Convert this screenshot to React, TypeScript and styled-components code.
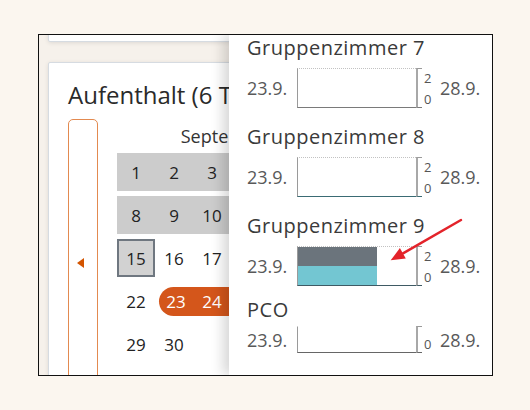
import React from "react";
import styled, { createGlobalStyle } from "styled-components";

const Global = createGlobalStyle`
  html, body { margin: 0; padding: 0; background: #fbf6ef; }
  body { font-family: "Open Sans", "Noto Sans", Arial, sans-serif; }
  * { box-sizing: border-box; }
`;

const Frame = styled.div`
  position: relative;
  margin: 34px 0 0 38px;
  width: 455px;
  height: 342px;
  border: 1px solid #111;
  background: #f6f1eb;
  overflow: hidden;
`;

const Main = styled.div`
  padding: 0 9px;
  display: flex;
  flex-direction: column;
  gap: 20px;
`;

const Card = styled.section`
  background: #fff;
  border: 1px solid #d6dbe1;
  border-radius: 2px;
  box-shadow: 0 1px 4px rgba(0, 0, 0, 0.1);
`;

const PrevCard = styled(Card)`
  margin-top: -11px;
  height: 18px;
`;

const StayCard = styled(Card)`
  padding: 17px 19px 0 19px;
`;

const Title = styled.h2`
  margin: 0 0 10px 0;
  font-size: 24px;
  line-height: 29px;
  font-weight: 400;
  color: #2a2a2a;
  white-space: nowrap;
`;

const CalendarBody = styled.div`
  display: flex;
  align-items: stretch;
`;

const NavButton = styled.button`
  width: 30px;
  padding: 0;
  border: 1px solid #e38a50;
  border-radius: 5px;
  background: #fff;
  display: flex;
  align-items: center;
  justify-content: center;
`;

const Triangle = styled.span`
  width: 0;
  height: 0;
  border-top: 5px solid transparent;
  border-bottom: 5px solid transparent;
  border-right: 7px solid #d35400;
  margin-right: 5px;
`;

const Calendar = styled.div`
  margin-left: 19px;
  width: 266px;
`;

const MonthTitle = styled.div`
  height: 34px;
  line-height: 34px;
  text-align: center;
  font-size: 18px;
  color: #333;
`;

const DayGrid = styled.div`
  display: grid;
  grid-template-columns: repeat(7, 38px);
  grid-auto-rows: 38px;
  row-gap: 5px;
`;

const Day = styled.div<{ $past?: boolean; $today?: boolean }>`
  display: flex;
  align-items: center;
  justify-content: center;
  font-size: 17px;
  color: #222;
  background: ${(p) => (p.$today ? "#d2d2d2" : p.$past ? "#cccccc" : "transparent")};
  border: ${(p) => (p.$today ? "2px solid #6f7780" : "none")};
`;

const RangeFill = styled.span<{ $start?: boolean; $end?: boolean }>`
  flex: 1;
  height: 29px;
  display: flex;
  align-items: center;
  justify-content: center;
  background: #d4561b;
  color: #fff;
  margin-left: ${(p) => (p.$start ? "4px" : "0")};
  margin-right: ${(p) => (p.$end ? "4px" : "0")};
  border-radius: ${(p) =>
    p.$start ? "15px 0 0 15px" : p.$end ? "0 15px 15px 0" : "0"};
`;

const Panel = styled.aside`
  position: absolute;
  top: 0;
  right: 0;
  bottom: 0;
  width: 263px;
  background: #fff;
  box-shadow: -6px 0 12px rgba(0, 0, 0, 0.16);
  padding: 1px 0 0 18px;
`;

const Room = styled.div<{ $mt: number }>`
  margin-top: ${(p) => p.$mt}px;
`;

const RoomName = styled.div`
  font-size: 20px;
  letter-spacing: 0.5px;
  line-height: 24px;
  color: #3a3a3a;
  white-space: nowrap;
`;

const ChartRow = styled.div<{ $pt: number }>`
  padding-top: ${(p) => p.$pt}px;
  display: flex;
  align-items: center;
`;

const DateText = styled.span<{ $w?: number }>`
  font-size: 18px;
  line-height: 24px;
  color: #595959;
  width: ${(p) => (p.$w ? `${p.$w}px` : "auto")};
  white-space: nowrap;
`;

const Plot = styled.div<{ $h: number; $base: string; $dotted: boolean }>`
  width: 119px;
  height: ${(p) => p.$h}px;
  border-left: 1px solid #9a9a9a;
  border-top: 1px ${(p) => (p.$dotted ? "dotted #c2c2c2" : "solid transparent")};
  border-bottom: 1px solid ${(p) => p.$base};
  display: flex;
  flex-direction: column;
`;

const Bar = styled.div<{ $color: string }>`
  flex: 1;
  background: ${(p) => p.$color};
`;

const Bracket = styled.div<{ $h: number; $base: string }>`
  width: 6px;
  height: ${(p) => p.$h}px;
  border-left: 2px solid #a8a8a8;
  border-top: 1px solid #9a9a9a;
  border-bottom: 1px solid ${(p) => p.$base};
`;

const AxisLabels = styled.div<{ $h: number; $single: boolean }>`
  width: 18px;
  height: ${(p) => p.$h}px;
  padding: 1px 0 0 2px;
  display: flex;
  flex-direction: column;
  justify-content: ${(p) => (p.$single ? "flex-end" : "space-between")};
  font-size: 13px;
  line-height: 18px;
  color: #555;
`;

const Overlay = styled.svg`
  position: absolute;
  inset: 0;
  pointer-events: none;
`;

type RoomData = {
  name: string;
  h: number;
  ticks: string[];
  base: string;
  fill?: number;
  mt: number;
  pt: number;
};

const rooms: RoomData[] = [
  { name: "Gruppenzimmer 7", h: 40, ticks: ["2", "0"], base: "#7a7a7a", mt: 0, pt: 8 },
  { name: "Gruppenzimmer 8", h: 40, ticks: ["2", "0"], base: "#3a6b74", mt: 17, pt: 8 },
  { name: "Gruppenzimmer 9", h: 40, ticks: ["2", "0"], base: "#3f5a64", fill: 67, mt: 17, pt: 8 },
  { name: "PCO", h: 27, ticks: ["0"], base: "#666666", mt: 12, pt: 4 },
  { name: "Bibliothek", h: 40, ticks: ["2", "0"], base: "#7a7a7a", mt: 19, pt: 8 },
];

const days: (number | null)[] = Array.from({ length: 42 }, (_, i) =>
  i < 30 ? i + 1 : null
);

function DayCell({ d }: { d: number | null }) {
  if (d === null) return <Day />;
  if (d >= 23 && d <= 28) {
    return (
      <Day>
        <RangeFill $start={d === 23} $end={d === 28}>
          {d}
        </RangeFill>
      </Day>
    );
  }
  return (
    <Day $past={d < 15} $today={d === 15}>
      {d}
    </Day>
  );
}

function RoomChart({ r }: { r: RoomData }) {
  return (
    <Room $mt={r.mt}>
      <RoomName>{r.name}</RoomName>
      <ChartRow $pt={r.pt}>
        <DateText $w={50}>23.9.</DateText>
        <Plot $h={r.h} $base={r.base} $dotted={r.ticks.length > 1}>
          {r.fill ? (
            <>
              <Bar $color="#6b747c" style={{ width: `${r.fill}%` }} />
              <Bar $color="#73c6d2" style={{ width: `${r.fill}%` }} />
            </>
          ) : null}
        </Plot>
        <Bracket $h={r.h} $base={r.base} />
        <AxisLabels $h={r.h} $single={r.ticks.length === 1}>
          {r.ticks.map((t) => (
            <span key={t}>{t}</span>
          ))}
        </AxisLabels>
        <DateText>28.9.</DateText>
      </ChartRow>
    </Room>
  );
}

export default function App() {
  return (
    <>
      <Global />
      <Frame>
        <Main>
          <PrevCard />
          <StayCard>
            <Title>Aufenthalt (6 Tage)</Title>
            <CalendarBody>
              <NavButton aria-label="Vorheriger Monat">
                <Triangle />
              </NavButton>
              <Calendar>
                <MonthTitle>September 2025</MonthTitle>
                <DayGrid>
                  {days.map((d, i) => (
                    <DayCell key={i} d={d} />
                  ))}
                </DayGrid>
              </Calendar>
            </CalendarBody>
          </StayCard>
        </Main>
        <Panel>
          {rooms.map((r) => (
            <RoomChart key={r.name} r={r} />
          ))}
        </Panel>
        <Overlay width="453" height="340" viewBox="0 0 453 340">
          <line
            x1="422"
            y1="185"
            x2="364"
            y2="218.3"
            stroke="#e3232a"
            strokeWidth="2.5"
            strokeLinecap="round"
          />
          <polygon points="351.7,225.3 366.8,223.5 360.9,213.1" fill="#e3232a" />
        </Overlay>
      </Frame>
    </>
  );
}
